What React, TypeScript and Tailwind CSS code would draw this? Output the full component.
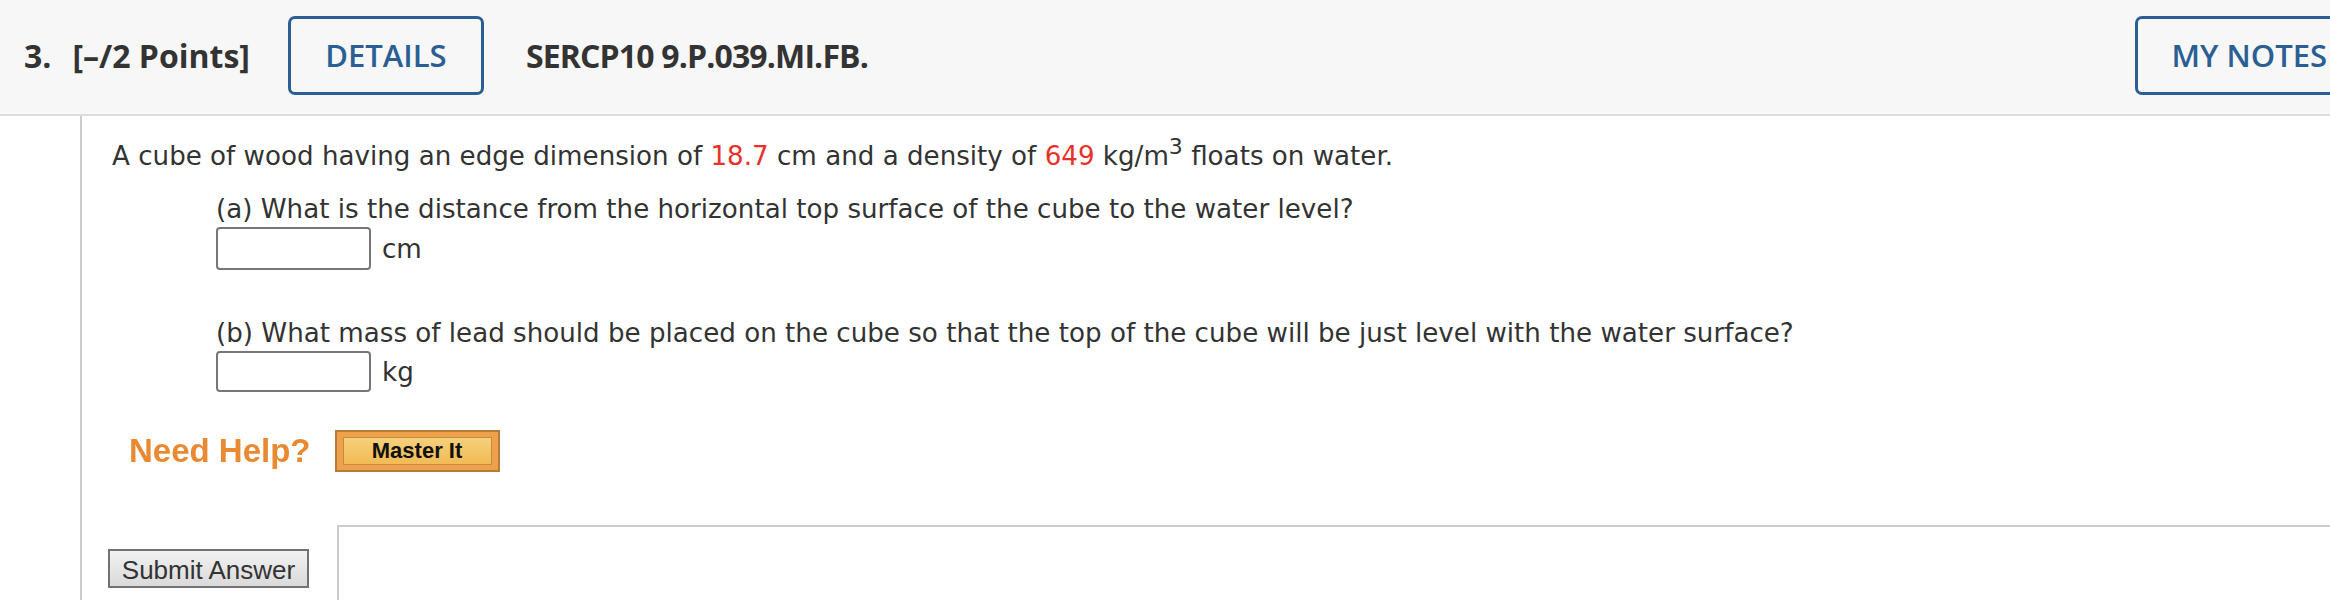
export default function App() {
  return (
    <div className="h-[600px] w-[2330px] overflow-hidden bg-white">
      {/* question header */}
      <div
        className="flex h-[116px] w-[2364px] items-center border-b-2 border-[#ddd] bg-[#f7f7f7] pb-[3px] pl-[24px] text-[#333]"
        style={{ fontFamily: '"Open Sans", "Liberation Sans", sans-serif' }}
      >
        <span className="text-[32px] font-bold">3.</span>
        <span className="ml-[21px] text-[32px] font-bold">[–/2 Points]</span>
        <button className="ml-[38px] h-[79px] w-[196px] rounded-[7px] border-[3px] border-[#2b5f93] text-[31px] font-semibold text-[#2b5f93]">
          DETAILS
        </button>
        <span className="ml-[42px] text-[32px] font-bold tracking-[-0.85px]">SERCP10 9.P.039.MI.FB.</span>
        <button className="ml-auto h-[79px] rounded-[7px] border-[3px] border-[#2b5f93] px-[34px] text-[31px] font-semibold text-[#2b5f93]">
          MY NOTES
        </button>
      </div>

      {/* question body */}
      <div className="ml-[80px] h-[484px] border-l-2 border-[#ccc]">
        <div
          className="pl-[30px] pt-[22px] text-[26.15px] leading-[36px] text-[#333]"
          style={{ fontFamily: '"DejaVu Sans", Verdana, sans-serif' }}
        >
          <p>
            A cube of wood having an edge dimension of <span className="text-[#e8312a]">18.7</span> cm and a
            density of <span className="text-[#e8312a]">649</span> kg/m<sup className="text-[22px]">3</sup> floats on
            water.
          </p>

          <div className="mt-[17px] pl-[104px]">
            <p>(a) What is the distance from the horizontal top surface of the cube to the water level?</p>
            <div className="flex items-center gap-[11px]">
              <input className="h-[43px] w-[155px] rounded-[4px] border-2 border-[#777] bg-white" />
              <span>cm</span>
            </div>

            <p className="mt-[45px]">
              (b) What mass of lead should be placed on the cube so that the top of the cube will be just level with
              the water surface?
            </p>
            <div className="flex items-center gap-[11px]">
              <input className="h-[41px] w-[155px] rounded-[4px] border-2 border-[#777] bg-white" />
              <span>kg</span>
            </div>
          </div>
        </div>

        <div
          className="mt-[34px] flex items-center pl-[47px]"
          style={{ fontFamily: '"Liberation Sans", Arial, sans-serif' }}
        >
          <span className="text-[33px] font-bold text-[#e98a32] blur-[0.4px]">Need Help?</span>
          <button className="ml-[24px] h-[42px] w-[165px] border-2 border-[#b47c3c] bg-[#eea04a] px-[6px] py-[5px]">
            <span className="flex h-full w-full items-center justify-center border border-[#c28c42] bg-gradient-to-b from-[#f6d07a] to-[#f1bb55] text-[22px] font-bold text-[#111]">
              Master It
            </span>
          </button>
        </div>

        <div className="mt-[49px] flex items-start pl-[26px]">
          <button
            className="mt-[24px] h-[39px] w-[201px] border-2 border-[#727272] bg-gradient-to-b from-[#f2f2f2] to-[#dadada] text-[26px] text-[#333]"
            style={{ fontFamily: '"Liberation Sans", Arial, sans-serif' }}
          >
            Submit Answer
          </button>
          <div className="ml-[28px] h-[120px] flex-1 border-l-2 border-t-2 border-[#ccc]" />
        </div>
      </div>
    </div>
  );
}
